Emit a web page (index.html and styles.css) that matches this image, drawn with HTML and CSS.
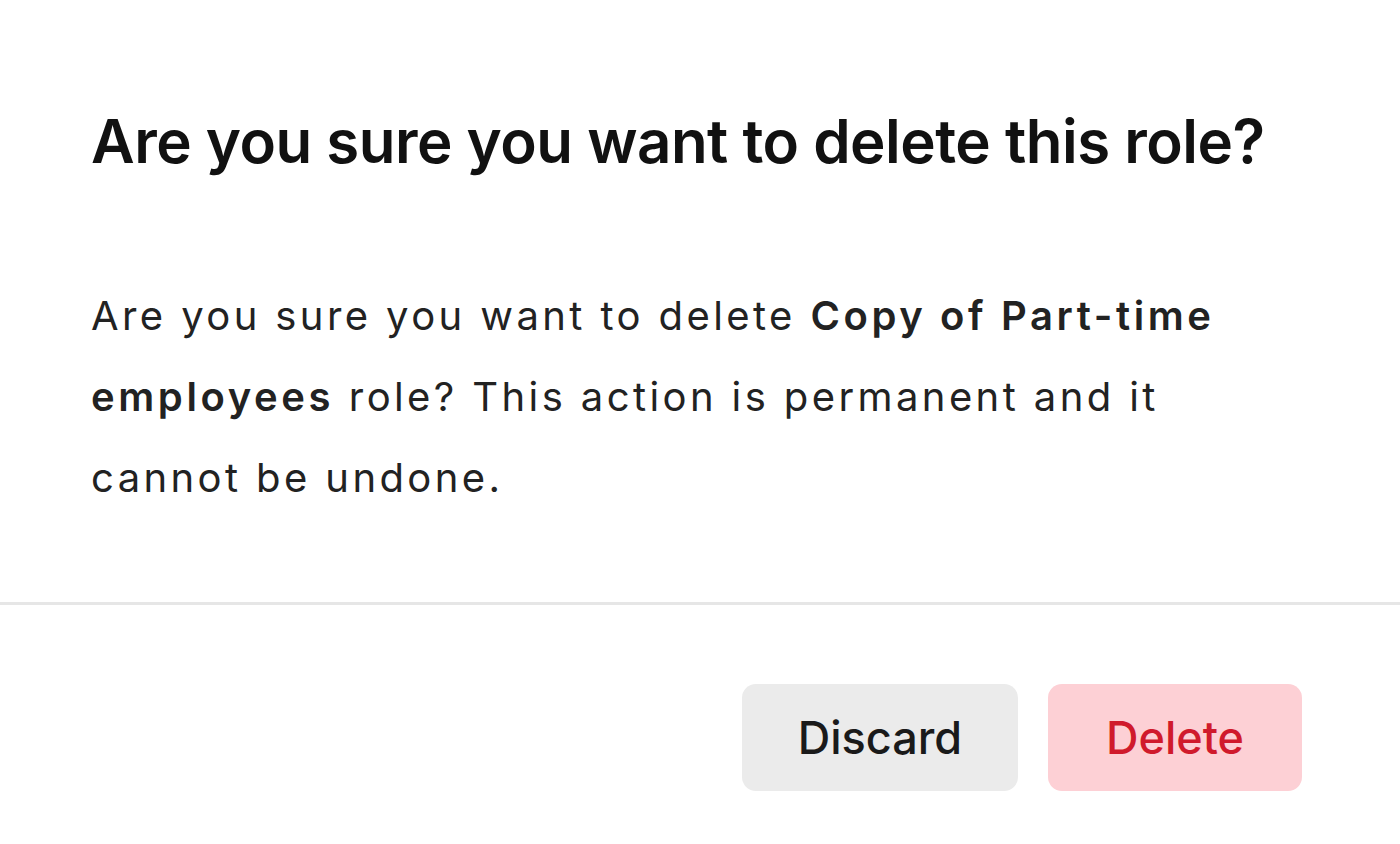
FILE: index.html
```html
<!DOCTYPE html>
<html>
<head>
<meta charset="utf-8">
<link rel="stylesheet" href="styles.css">
</head>
<body>
<div class="dialog">
  <div class="content">
    <h1 class="title">Are you sure you want to delete this role?</h1>
    <p class="text">Are you sure you want to delete <b>Copy of Part-time employees</b> role? This action is permanent and it cannot be undone.</p>
  </div>
  <div class="footer">
    <button class="btn btn-discard">Discard</button>
    <button class="btn btn-delete">Delete</button>
  </div>
</div>
</body>
</html>
```
FILE: styles.css
```css
html, body {
  margin: 0;
  padding: 0;
  background: #ffffff;
}
body {
  font-family: Inter, "Noto Sans", sans-serif;
  width: 1400px;
  height: 844px;
  overflow: hidden;
}
.dialog {
  display: flex;
  flex-direction: column;
}
.content {
  padding: 105px 91px 0 91px;
  height: 605px;
  box-sizing: border-box;
  border-bottom: 3px solid #e6e6e6;
}
.title {
  margin: 0;
  font-size: 60px;
  font-weight: 600;
  color: #111111;
  line-height: 72px;
  letter-spacing: -0.5px;
}
.text {
  margin: 98px 0 0 0;
  font-size: 40px;
  line-height: 81px;
  color: #222222;
  letter-spacing: 3.4px;
  max-width: 1200px;
}
.text b {
  font-weight: 600;
  letter-spacing: 3.6px;
}
.footer {
  display: flex;
  justify-content: flex-end;
  gap: 30px;
  padding: 79px 98px 0 0;
}
.btn {
  border: none;
  font-family: Inter, "Noto Sans", sans-serif;
  font-size: 45px;
  font-weight: 500;
  height: 107px;
  border-radius: 14px;
  padding: 0;
}
.btn-discard {
  width: 276px;
  background: #ebebeb;
  color: #1a1a1a;
}
.btn-delete {
  width: 254px;
  background: #fdd0d5;
  color: #d01a2c;
}
```
